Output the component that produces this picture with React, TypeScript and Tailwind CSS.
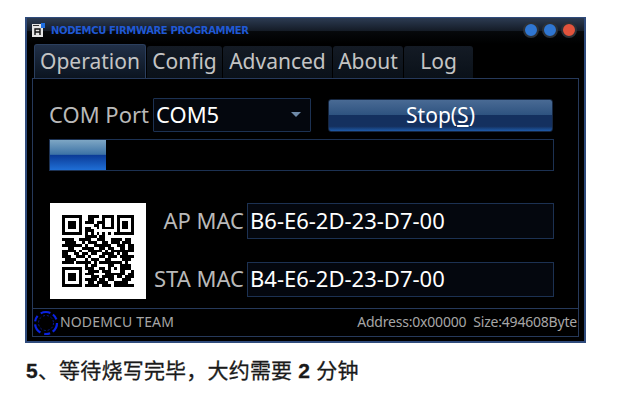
import React from "react";

const QR_ROWS = [
  "1111111001111011110111111",
  "1000001001100010010100001",
  "1011101011101110010101101",
  "1011101000011010010101101",
  "1011101011001011110101101",
  "1000001011100000000100001",
  "1111111010101010101111111",
  "0000000011110110000000000",
  "1111001111001110011110110",
  "0111100101110011011101110",
  "1111111010011111100111011",
  "0011000111100110110011011",
  "1111101001111101011111111",
  "1100110110110011110101100",
  "1110011101000110111011111",
  "0111100010111001100001110",
  "1111011111010111111110100",
  "0000000010110000110011110",
  "1111111011100110101011110",
  "1000001001111011100011001",
  "1011101011100001111111011",
  "1011101000111011110110111",
  "1011101011110110110001110",
  "1000001001101111001111100",
  "1111111011111011101111111",
];

const QrCode = () => (
  <svg width="72" height="72" viewBox="0 0 25 25" shapeRendering="crispEdges">
    {QR_ROWS.map((row, y) =>
      row
        .split("")
        .map((cell, x) =>
          cell === "1" ? <rect key={`${x}-${y}`} x={x} y={y} width="1" height="1" fill="#000" /> : null
        )
    )}
  </svg>
);

const TeamLogo = () => (
  <svg width="26" height="26" viewBox="0 0 26 26" fill="none">
    <circle cx="13" cy="13" r="11" stroke="#0a22e0" strokeWidth="2.2" strokeDasharray="10 3 6 4" />
    <circle cx="13" cy="13" r="7.5" stroke="#0a1a90" strokeWidth="1" strokeDasharray="2 2" />
  </svg>
);

const AppIcon = () => (
  <svg width="13" height="14" viewBox="0 0 13 14">
    <rect x="0" y="1" width="11" height="13" fill="#e4e4e4" />
    <rect x="1" y="2" width="6" height="1" fill="#333" />
    <path d="M3 12V6h5v6M3 9h5" stroke="#111" strokeWidth="1.4" fill="none" />
    <rect x="9" y="0" width="4" height="5" fill="#1f6fe0" />
  </svg>
);

const WindowDot = ({ color }: { color: string }) => (
  <div className={`w-[16px] h-[16px] rounded-full border-2 border-[#2c3138] ${color}`} />
);

const tabs = [
  { label: "Operation", width: "w-[112px]", active: true },
  { label: "Config", width: "w-[75px]" },
  { label: "Advanced", width: "w-[109px]" },
  { label: "About", width: "w-[70px]" },
  { label: "Log", width: "w-[69px]" },
];

const macRows = [
  { label: "AP MAC", value: "B6-E6-2D-23-D7-00", height: "h-[36px]" },
  { label: "STA MAC", value: "B4-E6-2D-23-D7-00", height: "h-[35px]" },
];

export default function App() {
  return (
    <div className="w-[621px] h-[405px] bg-white overflow-hidden font-['Noto_Sans',sans-serif]">
      <div className="ml-[25px] pt-[17px] w-[561px]">
        <div className="h-[326px] bg-black border-x-2 border-b-2 border-t border-[#2f4b7c] flex flex-col">
          {/* title bar */}
          <div className="h-[26px] shrink-0 flex items-center pl-[5px] pr-[7px] pb-[2px] bg-[linear-gradient(#2c3b52,#141b26_50%,#06080b_52%,#000)]">
            <AppIcon />
            <span className="ml-[6px] text-[10px] font-bold text-[#2059d4] font-['DejaVu_Sans',sans-serif] tracking-[-0.35px]">
              NODEMCU FIRMWARE PROGRAMMER
            </span>
            <div className="ml-auto flex gap-[3px]">
              <WindowDot color="bg-[#2f76d2]" />
              <WindowDot color="bg-[#2f76d2]" />
              <WindowDot color="bg-[#e2533c]" />
            </div>
          </div>

          {/* tabs */}
          <div className="h-[34px] shrink-0 flex items-end gap-[1px] pl-[7px]">
            {tabs.map((tab) => (
              <div
                key={tab.label}
                className={
                  tab.active
                    ? `${tab.width} h-[34px] flex items-center justify-center rounded-t-[3px] border border-b-0 border-[#2b3f5e] bg-[linear-gradient(#213048,#0b1420)] text-[21px] text-[#c4c4c4]`
                    : `${tab.width} h-[32px] flex items-center justify-center rounded-t-[3px] bg-[linear-gradient(#141b25,#0a1119)] text-[21px] text-[#c4c4c4]`
                }
              >
                {tab.label}
              </div>
            ))}
          </div>

          {/* page */}
          <div className="ml-[5px] mr-[5px] h-[259px] border border-[#26395a] flex flex-col">
            <div className="h-[230px] shrink-0 border-b border-[#26395a] pl-[16px] pr-[24px] pt-[19px]">
              <div className="flex items-center h-[34px]">
                <span className="w-[104px] pb-[2px] text-[22px] text-[#b9b9b9] whitespace-nowrap">COM Port</span>
                <div className="w-[158px] h-[34px] flex items-center border border-[#1c3152] bg-[#04070e] pl-[2px] pr-[9px] pb-[2px] rounded-[1px]">
                  <span className="text-[22px] text-white">COM5</span>
                  <div className="ml-auto w-0 h-0 border-x-[5px] border-x-transparent border-t-[5px] border-t-[#6f8aa8]" />
                </div>
                <button className="ml-[17px] w-[225px] h-[33px] pt-[2px] flex items-center justify-center rounded-[3px] border border-[#16263f] bg-[linear-gradient(#496a94,#2e5380_48%,#14305f_50%,#14305f_85%,#1e5aa8)] text-[21px] text-white">
                  <span>
                    Stop(<span className="underline">S</span>)
                  </span>
                </button>
              </div>

              <div className="mt-[7px] h-[32px] border border-[#1c3152]">
                <div className="w-[56px] h-full bg-[linear-gradient(#7ea6c4,#3d73a6_48%,#0b3a96_50%,#1f6fd6)]" />
              </div>

              <div className="mt-[32px] flex">
                <div className="w-[96px] h-[96px] ml-[1px] bg-white shrink-0 flex items-center justify-center">
                  <QrCode />
                </div>
                <div className="flex-1 flex flex-col gap-[23px] pl-[5px]">
                  {macRows.map((row) => (
                    <div key={row.label} className={`flex items-center ${row.height}`}>
                      <span className="w-[93px] mr-[3px] pb-[2px] text-right text-[22px] text-[#b9b9b9] whitespace-nowrap">
                        {row.label}
                      </span>
                      <div className="flex-1 h-full flex items-center border border-[#1c3152] bg-[#04070e] pl-[2px] pb-[2px] text-[22px] text-white">
                        {row.value}
                      </div>
                    </div>
                  ))}
                </div>
              </div>
            </div>

            {/* status */}
            <div className="flex-1 flex items-start text-[14px] leading-[25px] text-[#a6a6a6]">
              <div className="mt-[1px] flex">
                <TeamLogo />
              </div>
              <span className="ml-[1px] tracking-[0.15px]">NODEMCU TEAM</span>
              <span className="ml-auto pr-[1px] whitespace-pre tracking-[-0.2px]">Address:0x00000  Size:494608Byte</span>
            </div>
          </div>
        </div>
      </div>

      <p className="ml-[26px] mt-[15px] text-[21px] leading-[26px] tracking-[0.2px] text-[#1a1a1a] font-['Liberation_Sans','Noto_Sans_CJK_SC',sans-serif] whitespace-pre [-webkit-text-stroke:0.3px_#1a1a1a]">
        <span className="font-bold">5</span>、等待烧写完毕，大约需要 <span className="font-bold">2</span> 分钟
      </p>
    </div>
  );
}
